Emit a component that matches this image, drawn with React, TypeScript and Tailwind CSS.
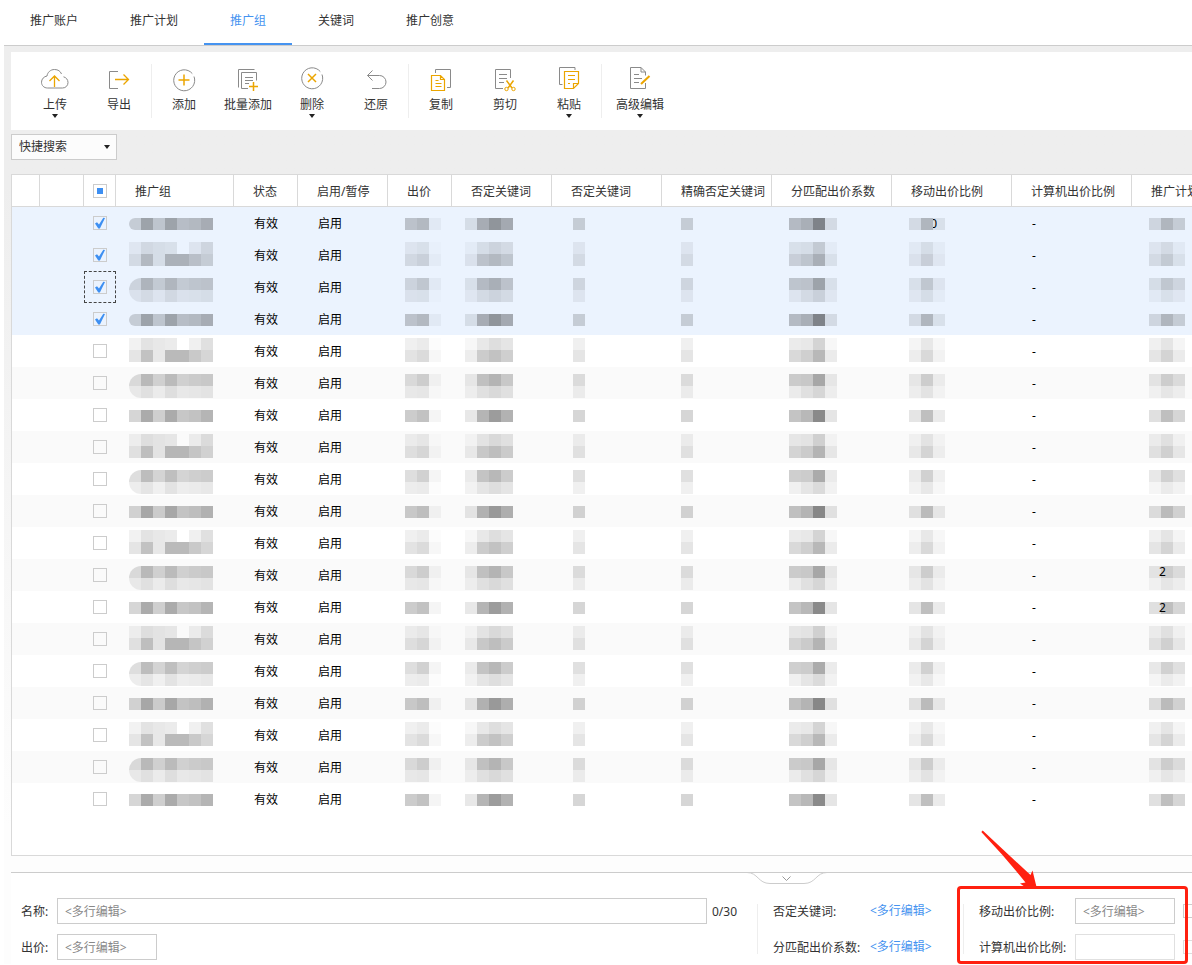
import { ReactNode } from "react";
import clsx from "clsx";

const GRAY = "#8a8a8a";
const GOLD = "#eba500";

const tabs = ["推广账户", "推广计划", "推广组", "关键词", "推广创意"];

type Tool = { label: string; menu?: boolean; icon: ReactNode };

const toolGroups: Tool[][] = [
  [
    {
      label: "上传",
      menu: true,
      icon: (
        <>
          <path d="M20.5 8C19.5 5.200 17 3.500 13.500 3.500C9.500 3.500 6.500 6.300 6 10C3 10.500 .5 13 .5 16.200C.5 19.500 3 22 6.500 22H21.500C24.800 22 27 19.500 27 16.500C27 13.800 25.300 11.500 22.500 10.800" />
          <path stroke={GOLD} strokeWidth="1.300" d="M13.500 21V10M8.500 15l5-5 5 5" />
        </>
      ),
    },
    {
      label: "导出",
      icon: (
        <>
          <path d="M13 5.500H4.500V22.500H13" />
          <path stroke={GOLD} strokeWidth="1.300" d="M10 13.500H23.500M18.500 8.500l5 5-5 5" />
        </>
      ),
    },
  ],
  [
    {
      label: "添加",
      icon: (
        <>
          <path d="M22.300 7.600A10.500 10.500 0 1 0 24 10.500" />
          <path stroke={GOLD} strokeWidth="1.500" d="M14 8.500v11M8.500 14h11" />
        </>
      ),
    },
    {
      label: "批量添加",
      icon: (
        <>
          <path d="M20.500 3.500H4.500V21.500" />
          <path d="M14 22.500H7.500V6.500H22.500V14.500M11 11.500h8M11 14.500h8M11 17.500h4" />
          <path stroke={GOLD} strokeWidth="1.500" d="M19.500 16v9M15 20.500h9" />
        </>
      ),
    },
    {
      label: "删除",
      menu: true,
      icon: (
        <>
          <path d="M22.300 5.600A10.500 10.500 0 1 0 24 8.500" />
          <path stroke={GOLD} strokeWidth="1.500" d="M10 8l8 8M18 8l-8 8" />
        </>
      ),
    },
    {
      label: "还原",
      icon: <path d="M10.500 4.500l-5 5 5 5M5.500 9.500H17.500a6.500 6.500 0 0 1 0 13H10" />,
    },
  ],
  [
    {
      label: "复制",
      icon: (
        <>
          <path d="M8.500 7V3.500H23.500V21.500H20" />
          <path
            stroke={GOLD}
            strokeWidth="1.200"
            d="M4.500 9.500h9l4 4V24.500H4.500ZM13.500 9.500v4h4M8.500 14.500h3M8.500 17.500h6M8.500 20.500h6"
          />
        </>
      ),
    },
    {
      label: "剪切",
      icon: (
        <>
          <path d="M19.500 12V3.500H4.500V22.500H12M8 8.500h8M8 12.500h8M8 16.500h5" />
          <g stroke={GOLD}>
            <path strokeWidth="1.500" d="M15.500 14.500l5.500 7.500M22.500 14.500l-5.500 7.500" />
            <circle cx="15.500" cy="23" r="1.700" />
            <circle cx="22.500" cy="23" r="1.700" />
          </g>
        </>
      ),
    },
    {
      label: "粘贴",
      menu: true,
      icon: (
        <>
          <path d="M20 4V1.500H4.500V18.500H7.500" />
          <path
            stroke={GOLD}
            strokeWidth="1.200"
            d="M9.500 5.500H23.500V17.500l-5 5H9.500ZM18.500 22.500v-5h5M13 9.500h7M13 13.500h7M13 17.500h2"
          />
        </>
      ),
    },
  ],
  [
    {
      label: "高级编辑",
      menu: true,
      icon: (
        <>
          <path d="M19.500 9.500V6l-4.500-4.500H4.500V22.500H19.500V17M15 1.500V6h4.500M8 8.500h5M8 12.500h8M8 16.500h5" />
          <path stroke={GOLD} strokeWidth="2" d="M23.500 10l-8.500 8" />
        </>
      ),
    },
  ],
];

// opacity of every masked block, one list for each line of blocks
type Blocks = { full: number[][]; low: number[][]; high: number[][] };

const nameBlocks: Blocks = {
  full: [[0.16, 0.33, 0.19, 0.33, 0.22, 0.24, 0.29]],
  low: [
    [0.05, 0.11, 0.09, 0.08, 0, 0.06, 0.12],
    [0.1, 0.24, 0.09, 0.27, 0.27, 0.21, 0.16],
  ],
  high: [
    [0.13, 0.26, 0.17, 0.25, 0.17, 0.19, 0.2],
    [0.07, 0.1, 0.06, 0.11, 0.07, 0.08, 0.09],
  ],
};

const priceBlocks: Blocks = {
  full: [[0.2, 0.24, 0.04]],
  low: [
    [0.06, 0.08, 0.01],
    [0.11, 0.14, 0.03],
  ],
  high: [
    [0.13, 0.18, 0.04],
    [0.07, 0.08, 0.01],
  ],
};

const negativeBlocks: Blocks = {
  full: [[0.09, 0.29, 0.39, 0.3]],
  low: [
    [0.03, 0.09, 0.13, 0.1],
    [0.07, 0.2, 0.24, 0.19],
  ],
  high: [
    [0.08, 0.23, 0.28, 0.2],
    [0.05, 0.1, 0.13, 0.1],
  ],
};

const singleBlocks: Blocks = {
  full: [[0.16]],
  low: [[0.06], [0.1]],
  high: [[0.12], [0.06]],
};

const factorBlocks: Blocks = {
  full: [[0.23, 0.28, 0.46, 0.1]],
  low: [
    [0.08, 0.09, 0.17, 0.03],
    [0.15, 0.19, 0.28, 0.08],
  ],
  high: [
    [0.19, 0.2, 0.33, 0.08],
    [0.06, 0.1, 0.14, 0.05],
  ],
};

const mobileBlocks: Blocks = {
  full: [[0.1, 0.25, 0.08]],
  low: [
    [0.04, 0.09, 0.03],
    [0.07, 0.15, 0.05],
  ],
  high: [
    [0.08, 0.18, 0.06],
    [0.05, 0.09, 0.03],
  ],
};

const planBlocks: Blocks = {
  full: [[0.12, 0.25, 0.16]],
  low: [
    [0.06, 0.1, 0.04],
    [0.1, 0.17, 0.08],
  ],
  high: [
    [0.09, 0.18, 0.12],
    [0.04, 0.08, 0.05],
  ],
};

const columns = [
  { title: "", width: "w-7" },
  { title: "", width: "w-11" },
  { title: "check", width: "w-8" },
  { title: "推广组", width: "w-[118px]" },
  { title: "状态", width: "w-16" },
  { title: "启用/暂停", width: "w-[90px]" },
  { title: "出价", width: "w-16" },
  { title: "否定关键词", width: "w-[100px]" },
  { title: "否定关键词", width: "w-[110px]" },
  { title: "精确否定关键词", width: "w-[110px]" },
  { title: "分匹配出价系数", width: "w-[120px]" },
  { title: "移动出价比例", width: "w-[120px]" },
  { title: "计算机出价比例", width: "w-[120px]" },
  { title: "推广计划", width: "w-[120px]" },
];

const rows = Array.from({ length: 19 }, (_, i) => ({
  id: i,
  selected: i < 4,
  focused: i === 2,
  mobile: i === 0 ? "0" : "",
  plan: i === 11 || i === 12 ? "2" : "",
}));

const Caret = ({ className }: { className?: string }) => (
  <svg viewBox="0 0 6 4" className={clsx("h-1 w-1.5", className)} fill="#222">
    <path d="M0 0h6L3 4z" />
  </svg>
);

const CheckBox = ({ checked, label }: { checked?: boolean; label: string }) => (
  <label className="mx-auto grid size-3.5">
    <input
      type="checkbox"
      aria-label={label}
      defaultChecked={checked}
      className="peer col-start-1 row-start-1 size-3.5 appearance-none border border-[#ccc]"
    />
    <svg
      viewBox="0 0 14 14"
      className="pointer-events-none invisible col-start-1 row-start-1 peer-checked:visible"
      fill="#3d8ff2"
    >
      <path d="M2 7.500L4 6.200L6 8.500L10.300 1.800L12 2L6.900 12.500H5.300Z" />
    </svg>
  </label>
);

const Mosaic = ({
  blocks,
  row,
  className,
  rest,
  restClass,
}: {
  blocks: Blocks;
  row: number;
  className: string;
  rest?: string;
  restClass?: string;
}) => {
  // the 12px block grid meets the 32px rows in three ways
  const kind = (["full", "low", "high"] as const)[row % 3];
  return (
    <td
      className={clsx(
        "align-top",
        className,
        kind === "full" && "pt-[11px]",
        kind === "low" && "pt-[3px]",
        kind === "high" && "pt-[7px]"
      )}
    >
      <div className="relative w-fit">
        <div
          className={clsx(
            blocks === nameBlocks && "overflow-hidden",
            blocks === nameBlocks && kind === "full" && row < 4 && "rounded-l-md",
            blocks === nameBlocks && kind === "high" && "rounded-l-xl"
          )}
        >
          {blocks[kind].map((line, y) => (
            <div key={y} className="flex">
              {line.map((opacity, x) => (
                <span key={x} className="size-3 bg-black" style={{ opacity }} />
              ))}
            </div>
          ))}
        </div>
        {rest && (
          <span
            className={clsx("absolute top-0 flex justify-end overflow-hidden leading-3", restClass)}
          >
            {rest}
          </span>
        )}
      </div>
    </td>
  );
};

const Tabs = () => (
  <nav className="ml-1 flex h-[46px] border-b border-[#ccc]">
    {tabs.map((tab) => (
      <a
        key={tab}
        href="#"
        className={clsx(
          "-mb-px px-[26px] pt-[13px] leading-4",
          tab === "推广组" ? "h-[45px] border-b-2 border-[#4593f0] text-[#4593f0]" : "h-[46px]"
        )}
      >
        {tab}
      </a>
    ))}
  </nav>
);

const Toolbar = () => (
  <div className="flex h-[78px] bg-white pl-3">
    {toolGroups.map((group, i) => (
      <div key={i} className="flex">
        {i > 0 && <div className="mt-3 h-[54px] w-px bg-[#eee]" />}
        {group.map((tool) => (
          <button
            key={tool.label}
            type="button"
            className={clsx(
              "flex flex-col items-center pt-3.5",
              tool.label.length > 2 && i === 3 ? "w-[76px]" : "w-16"
            )}
          >
            <svg viewBox="0 0 28 28" className="size-7" fill="none" stroke={GRAY}>
              {tool.icon}
            </svg>
            <span className="mt-[3px] leading-4">{tool.label}</span>
            {tool.menu && <Caret className="mt-px" />}
          </button>
        ))}
      </div>
    ))}
  </div>
);

const cellClass = "p-0 pt-0.5 pl-5";

const GroupTable = () => (
  <div className="overflow-hidden border-y border-l border-[#d9d9d9] bg-white pb-10">
    <table className="w-[1240px] table-fixed border-separate border-spacing-0 text-black">
      <thead>
        <tr className="h-8 text-[#333]">
          {columns.map((col, i) => (
            <th
              key={i}
              className={clsx(
                "border-r border-b border-[#d9d9d9] p-0 text-left font-normal whitespace-nowrap",
                col.width,
                col.title !== "check" && "pt-0.5 pl-[19px]"
              )}
            >
              {col.title === "check" ? (
                <label className="mx-auto grid size-3.5 place-items-center">
                  <input
                    type="checkbox"
                    aria-label="全选"
                    className="col-start-1 row-start-1 size-3.5 appearance-none border border-[#ccc]"
                  />
                  <span className="col-start-1 row-start-1 size-1.5 bg-[#3d8ff2]" />
                </label>
              ) : (
                col.title
              )}
            </th>
          ))}
        </tr>
      </thead>
      <tbody>
        {rows.map((row) => (
          <tr
            key={row.id}
            className={clsx(
              "h-8",
              row.selected ? "bg-[#ebf3fe]" : row.id % 2 ? "bg-[#fafafa]" : "bg-white"
            )}
          >
            <td className="p-0" />
            <td className="p-0" />
            <td
              className={clsx(
                "p-0",
                row.focused && "outline-1 -outline-offset-1 outline-[#444] outline-dashed"
              )}
            >
              <CheckBox checked={row.selected} label={`选择第${row.id + 1}行`} />
            </td>
            <Mosaic blocks={nameBlocks} row={row.id} className="pl-[13px]" />
            <td className={cellClass}>有效</td>
            <td className={cellClass}>启用</td>
            <Mosaic blocks={priceBlocks} row={row.id} className="pl-[17px]" />
            <Mosaic blocks={negativeBlocks} row={row.id} className="pl-[13px]" />
            <Mosaic blocks={singleBlocks} row={row.id} className="pl-[21px]" />
            <Mosaic blocks={singleBlocks} row={row.id} className="pl-[19px]" />
            <Mosaic blocks={factorBlocks} row={row.id} className="pl-[17px]" />
            <Mosaic
              blocks={mobileBlocks}
              row={row.id}
              className="pl-[17px]"
              rest={row.mobile}
              restClass="left-6 w-1"
            />
            <td className={cellClass}>-</td>
            <Mosaic
              blocks={planBlocks}
              row={row.id}
              className="pl-[17px]"
              rest={row.plan}
              restClass="left-2.5"
            />
          </tr>
        ))}
      </tbody>
    </table>
  </div>
);

const inputClass = "h-[26px] border border-[#ccc] bg-white px-[7px] text-[#888] outline-none";

const EditPanel = () => (
  <section className="border-t border-[#ccc] bg-white pb-1">
    <button type="button" aria-label="收起" className="-mt-px ml-[736px] block h-3 w-20">
      <svg viewBox="0 0 80 12" className="h-3 w-20" fill="#fff" stroke="#ccc">
        <path d="M0 .5C11 .5 11 11.500 23 11.500H57C69 11.500 69 .5 80 .5Z" />
        <path fill="none" stroke="#999" d="M35.500 4.500l4 4 4-4" />
      </svg>
    </button>
    <div className="flex pt-3.5 pl-2.5 whitespace-nowrap">
      <div className="flex w-[736px] shrink-0 flex-col gap-2.5">
        <div className="flex items-center">
          <label htmlFor="name" className="w-9 pt-0.5">
            名称:
          </label>
          <input id="name" defaultValue="<多行编辑>" className={clsx(inputClass, "w-[650px]")} />
          <span className="pt-0.5 pl-[5px]">0/30</span>
        </div>
        <div className="flex items-center">
          <label htmlFor="price" className="w-9 pt-0.5">
            出价:
          </label>
          <input id="price" defaultValue="<多行编辑>" className={clsx(inputClass, "w-[100px]")} />
        </div>
      </div>
      <div className="my-1.5 w-px shrink-0 bg-[#eee]" />
      <div className="grid w-[205px] shrink-0 grid-cols-[97px_auto] items-center gap-y-2.5 pl-[15px]">
        <span className="pt-0.5">否定关键词:</span>
        <a href="#" className="text-[#4593f0]">
          &lt;多行编辑&gt;
        </a>
        <span className="pt-0.5">分匹配出价系数:</span>
        <a href="#" className="text-[#4593f0]">
          &lt;多行编辑&gt;
        </a>
      </div>
      <div className="my-1.5 w-px shrink-0 bg-[#eee]" />
      <div className="relative flex shrink-0 flex-col gap-2.5 pl-[15px]">
        <div className="flex items-center">
          <label htmlFor="mobile" className="w-24 pt-0.5">
            移动出价比例:
          </label>
          <input id="mobile" defaultValue="<多行编辑>" className={clsx(inputClass, "w-[100px]")} />
          <input
            type="checkbox"
            aria-label="移动出价比例"
            className="ml-2 size-3.5 appearance-none border border-[#ccc]"
          />
        </div>
        <div className="flex items-center">
          <label htmlFor="computer" className="w-24 pt-0.5">
            计算机出价比例:
          </label>
          <input
            id="computer"
            className="h-[26px] w-[100px] border border-[#e0e0e0] bg-white px-[7px] outline-none"
          />
          <input
            type="checkbox"
            aria-label="计算机出价比例"
            className="ml-2 size-3.5 appearance-none border border-[#ddd]"
          />
        </div>
        <div className="pointer-events-none absolute -top-3 -left-[7px] h-[78px] w-[231px] rounded-sm border-3 border-[#ff2010]">
          <svg
            viewBox="0 0 60 60"
            className="absolute bottom-full left-5 size-[60px]"
            fill="#ff2010"
          >
            <path d="M1.300 3L2.700 1.500L23 20.500L50.500 46L52.500 41.500L57 60H48L40 54.500L45.500 53.500L39 45.500L22 25.500Z" />
          </svg>
        </div>
      </div>
    </div>
  </section>
);

const App = () => {
  return (
    <div className="min-h-screen overflow-hidden bg-white font-['Noto_Sans','Noto_Sans_CJK_SC',sans-serif] text-xs text-[#333]">
      <Tabs />
      <main className="ml-1 bg-[#eee] bg-linear-to-b from-[#eee] from-15% to-[#fdfdfd] to-85% pt-1.5 pl-[7px]">
        <Toolbar />
        <div className="pt-1 pb-3.5">
          <div className="relative w-[106px]">
            <select
              aria-label="快捷搜索"
              className="h-[26px] w-full appearance-none border border-[#ccc] bg-[#fcfcfc] px-[7px]"
            >
              <option>快捷搜索</option>
            </select>
            <Caret className="pointer-events-none absolute top-[11px] right-[7px]" />
          </div>
        </div>
        <GroupTable />
        <div className="h-4" />
        <EditPanel />
      </main>
    </div>
  );
};

export default App;
